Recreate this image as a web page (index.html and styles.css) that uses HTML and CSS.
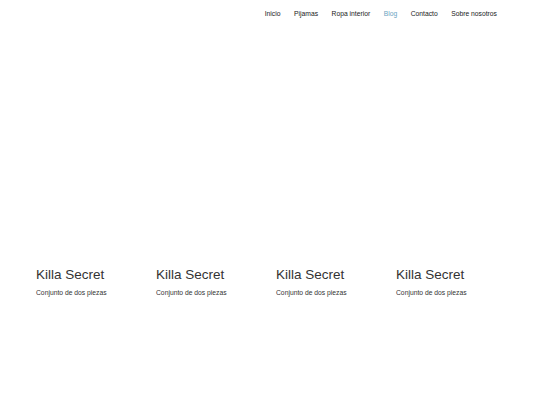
FILE: index.html
```html
<!DOCTYPE html>
<html lang="es">
<head>
<meta charset="UTF-8" />
<meta name="viewport" content="width=device-width, initial-scale=1" />
<title>Killa Secret</title>
<link rel="stylesheet" href="styles.css">
</head>
<body>

<header class="topbar">
  <nav class="menu">
    <a href="#">Inicio</a>
    <a href="#">Pijamas</a>
    <a href="#">Ropa interior</a>
    <a href="#" class="active">Blog</a>
    <a href="#">Contacto</a>
    <a href="#">Sobre nosotros</a>
  </nav>
</header>

<main class="products">
  <div class="card">
    <div class="card-img"></div>
    <h2>Killa Secret</h2>
    <p>Conjunto de dos piezas</p>
  </div>
  <div class="card">
    <div class="card-img"></div>
    <h2>Killa Secret</h2>
    <p>Conjunto de dos piezas</p>
  </div>
  <div class="card">
    <div class="card-img"></div>
    <h2>Killa Secret</h2>
    <p>Conjunto de dos piezas</p>
  </div>
  <div class="card">
    <div class="card-img"></div>
    <h2>Killa Secret</h2>
    <p>Conjunto de dos piezas</p>
  </div>
</main>

</body>
</html>
```

FILE: styles.css
```css
body {
  font-family: "Liberation Sans", Arial, sans-serif;
  margin: 0;
  background: #fff;
  color: #222;
}

/* top menu */
.topbar {
  display: flex;
  justify-content: flex-end;
  padding: 9.5px 43px 0 0;
  height: 20.5px;
}

.menu {
  display: flex;
  gap: 13.5px;
}

.menu a {
  font-size: 6.75px;
  color: #1a1a1a;
  text-decoration: none;
  line-height: 8px;
}

.menu a.active {
  color: #6aa3bf;
}

/* product grid */
.products {
  width: 480px;
  margin: 0 auto;
  display: grid;
  grid-template-columns: repeat(4, 1fr);
}

.card {
  padding: 0 6px;
}

.card-img {
  height: 236.5px;
}

.card h2 {
  font-size: 13.5px;
  font-weight: 400;
  color: #333;
  margin: 0 0 5px;
  line-height: 16px;
}

.card p {
  font-size: 6.75px;
  color: #333;
  margin: 0;
  line-height: 9px;
}
```
